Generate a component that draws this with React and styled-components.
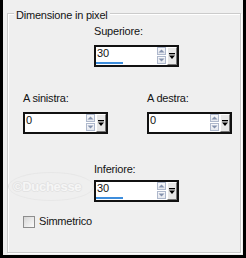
import React from "react";
import styled, { createGlobalStyle } from "styled-components";

const Global = createGlobalStyle`
  html, body { margin: 0; padding: 0; background: #efefef; }
  body { font-family: "Liberation Sans", Arial, sans-serif; }
`;

const Frame = styled.div`
  box-sizing: border-box;
  width: 246px;
  height: 258px;
  background: #efefef;
  border: 3px solid #000;
  border-top: none;
  padding: 13px 2px 2px 4px;
  display: flex;
  font-family: "Liberation Sans", Arial, sans-serif;
  font-size: 11px;
  letter-spacing: -0.2px;
  color: #141414;
`;

const Group = styled.section`
  position: relative;
  flex: 1;
  border: 1px solid #cbcbcb;
  box-shadow: inset 1px 1px #fff, 1px 1px #fff;
  padding: 11px 0 0 15px;
  display: flex;
  flex-direction: column;
`;

const Legend = styled.span`
  position: absolute;
  top: -5px;
  left: 6px;
  padding: 0 2px;
  line-height: 13px;
  background: #efefef;
  white-space: nowrap;
`;

const Row = styled.div`
  display: flex;
  gap: 39px;
  padding-left: ${(p) => p.$indent || 0}px;
  margin-top: ${(p) => p.$top || 0}px;
`;

const Field = styled.div`
  display: flex;
  flex-direction: column;
  gap: ${(p) => p.$gap ?? 7}px;
  width: 85px;
`;

const Label = styled.label`
  line-height: 13px;
  white-space: nowrap;
`;

const SpinBox = styled.div`
  position: relative;
  z-index: 1;
  box-sizing: border-box;
  width: 85px;
  height: 22px;
  border: 2px solid #111;
  background: #fff;
  display: flex;
`;

const ValueArea = styled.div`
  flex: 1;
  display: flex;
  flex-direction: column;
  padding-bottom: 1px;
`;

const Value = styled.span`
  line-height: 12px;
  padding-left: 1px;
`;

const Bar = styled.div`
  margin-top: auto;
  height: 2px;
  background: #3d8ddc;
`;

const Spin = styled.div`
  width: 10px;
  display: flex;
  flex-direction: column;
  gap: 1px;
  padding: 0 1px 1px 0;
  box-sizing: border-box;
`;

const SpinBtn = styled.div`
  box-sizing: border-box;
  width: 9px;
  height: 8px;
  border: 1px solid #aeb8cc;
  background: linear-gradient(#f7f8fb, #e6e9ef);
  display: flex;
  align-items: center;
  justify-content: center;
`;

const Drop = styled.div`
  box-sizing: border-box;
  width: 10px;
  background: #e8e8e8;
  border-top: 1px solid #fff;
  border-left: 1px solid #fff;
  border-right: 1px solid #777;
  border-bottom: 1px solid #777;
  display: flex;
  align-items: center;
  justify-content: center;
`;

const CheckRow = styled.label`
  display: flex;
  align-items: center;
  gap: 4px;
  line-height: 13px;
  margin-top: 13px;
`;

const Check = styled.span`
  box-sizing: border-box;
  width: 12px;
  height: 12px;
  border: 1px solid #8d8d8d;
  background: linear-gradient(135deg, #d6d6d6, #fbfbfb);
`;

const Watermark = styled.div`
  position: absolute;
  left: 0;
  top: 158px;
  width: 86px;
  height: 29px;
  box-sizing: border-box;
  border: 1px solid #e7e7e7;
  border-radius: 50%;
  display: flex;
  align-items: center;
  padding-left: 4px;
  font-weight: bold;
  font-size: 13px;
  letter-spacing: -0.3px;
  white-space: nowrap;
  color: #f6f6f6;
  text-shadow: 1px 0 #e3e3e3, -1px 0 #e3e3e3, 0 1px #e3e3e3, 0 -1px #e3e3e3;
  pointer-events: none;
`;

const Arrow = ({ up }) => (
  <svg width="7" height="4" viewBox="0 0 7 4">
    <polygon
      points={up ? "0.5,3.5 3.5,0.5 6.5,3.5" : "0.5,0.5 3.5,3.5 6.5,0.5"}
      fill="#8492ad"
    />
  </svg>
);

const DropIcon = () => (
  <svg width="6" height="7" viewBox="0 0 6 7">
    <rect x="0" y="0" width="6" height="1.3" fill="#000" />
    <polygon points="0,2.5 6,2.5 3,6" fill="#000" />
  </svg>
);

const MAX = 68;

const NumberInput = ({ value }) => (
  <SpinBox>
    <ValueArea>
      <Value>{value}</Value>
      {value > 0 && <Bar style={{ width: `${(value / MAX) * 100}%` }} />}
    </ValueArea>
    <Spin>
      <SpinBtn>
        <Arrow up />
      </SpinBtn>
      <SpinBtn>
        <Arrow />
      </SpinBtn>
    </Spin>
    <Drop>
      <DropIcon />
    </Drop>
  </SpinBox>
);

export default function App() {
  return (
    <>
      <Global />
      <Frame>
        <Group>
          <Legend>Dimensione in pixel</Legend>
          <Row $indent={71}>
            <Field>
              <Label>Superiore:</Label>
              <NumberInput value={30} />
            </Field>
          </Row>
          <Row $top={25}>
            <Field>
              <Label>A sinistra:</Label>
              <NumberInput value={0} />
            </Field>
            <Field>
              <Label>A destra:</Label>
              <NumberInput value={0} />
            </Field>
          </Row>
          <Row $indent={71} $top={29}>
            <Field $gap={4}>
              <Label>Inferiore:</Label>
              <NumberInput value={30} />
            </Field>
          </Row>
          <CheckRow>
            <Check />
            Simmetrico
          </CheckRow>
          <Watermark>©Duchesse</Watermark>
        </Group>
      </Frame>
    </>
  );
}
